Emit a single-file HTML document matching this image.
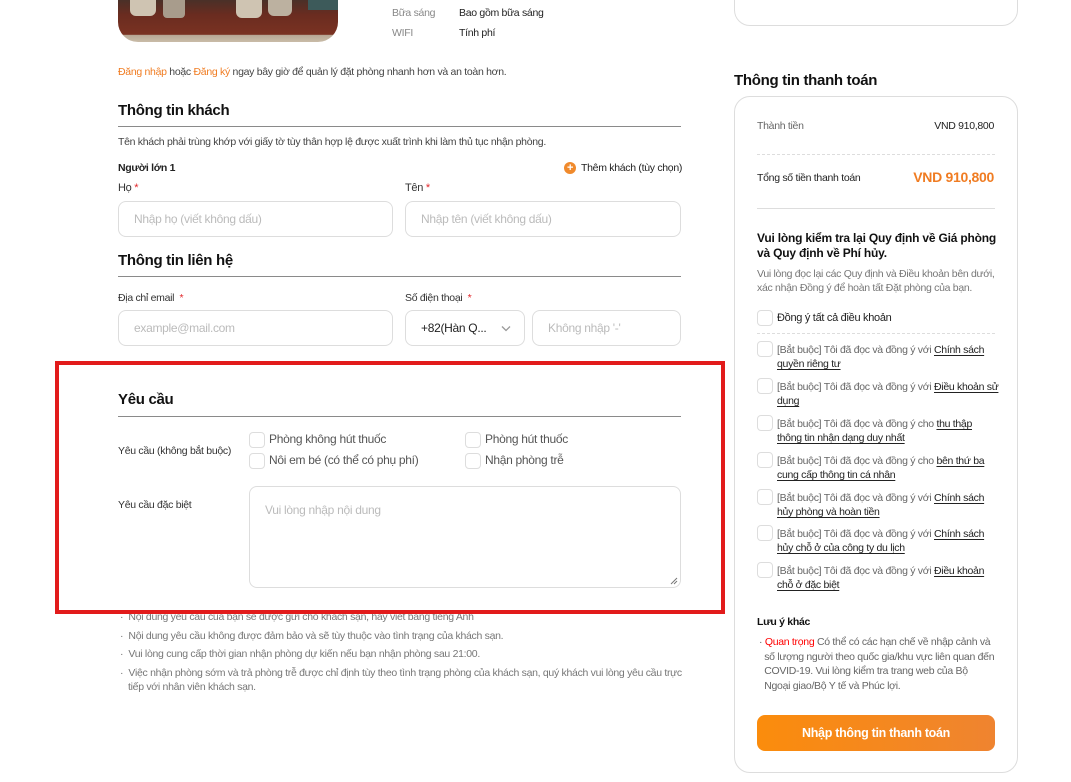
<!DOCTYPE html>
<html><head><meta charset="utf-8">
<style>
*{box-sizing:border-box;margin:0;padding:0}
body{width:1071px;height:782px;background:#fff;font-family:"Liberation Sans",Arial,sans-serif;color:#222;position:relative;overflow:hidden;letter-spacing:-0.3px}
.a{position:absolute;white-space:nowrap}
.t11{font-size:11px}
.t10{font-size:10.5px}
.h{font-size:15px;font-weight:bold;color:#111}
.line{position:absolute;height:1px;background:#8a8a8a}
.inp{position:absolute;border:1px solid #ddd;border-radius:8px;font-size:12px;color:#bbb;padding-left:15px;display:flex;align-items:center}
.cb{position:absolute;width:16px;height:16px;border:1px solid #ddd;border-radius:4px;background:#fff}
.g{color:#666}
.u{color:#222;text-decoration:underline;text-underline-offset:2px}
.req{color:#e2262a}
</style></head><body>

<!-- hotel image -->
<div class="a" style="left:118px;top:0;width:220px;height:42px;border-radius:0 0 20px 20px;overflow:hidden;background:linear-gradient(180deg,#4a3028 0,#6a2c20 35%,#7a3222 82%,#b9a996 84%,#c9bca8 100%)">
  <div style="position:absolute;left:12px;top:0;width:26px;height:16px;background:#cfc4b2;border-radius:0 0 6px 6px"></div>
  <div style="position:absolute;left:45px;top:0;width:22px;height:18px;background:#a89c8c;border-radius:0 0 4px 4px"></div>
  <div style="position:absolute;left:118px;top:0;width:26px;height:18px;background:#cfc4b2;border-radius:0 0 6px 6px"></div>
  <div style="position:absolute;left:150px;top:0;width:24px;height:16px;background:#bcb1a0;border-radius:0 0 6px 6px"></div>
  <div style="position:absolute;left:190px;top:0;width:30px;height:10px;background:#3d5a5a"></div>
</div>
<div class="a t10" style="left:392px;top:7px;color:#888">Bữa sáng</div>
<div class="a t10" style="left:459px;top:7px">Bao gồm bữa sáng</div>
<div class="a t10" style="left:392px;top:27px;color:#888">WIFI</div>
<div class="a t10" style="left:459px;top:27px">Tính phí</div>

<div class="a t10" style="left:118px;top:66px;color:#444"><span style="color:#f07c22">Đăng nhập</span> hoặc <span style="color:#f07c22">Đăng ký</span> ngay bây giờ để quản lý đặt phòng nhanh hơn và an toàn hơn.</div>

<div class="a h" style="left:118px;top:102px">Thông tin khách</div>
<div class="line" style="left:118px;top:126px;width:563px"></div>
<div class="a t10" style="left:118px;top:136px;color:#444">Tên khách phải trùng khớp với giấy tờ tùy thân hợp lệ được xuất trình khi làm thủ tục nhận phòng.</div>
<div class="a t10" style="left:118px;top:162px;font-weight:bold">Người lớn 1</div>
<div class="a" style="left:564px;top:162px;width:12px;height:12px;border-radius:50%;background:#f08a2c;color:#fff;font-size:11px;line-height:12px;text-align:center;font-weight:bold">+</div>
<div class="a t10" style="left:581px;top:162px">Thêm khách (tùy chọn)</div>
<div class="a t11" style="left:118px;top:182px;color:#333">Họ <span class="req">*</span></div>
<div class="a t11" style="left:405px;top:182px;color:#333">Tên <span class="req">*</span></div>
<div class="inp" style="left:118px;top:201px;width:275px;height:36px">Nhập họ (viết không dấu)</div>
<div class="inp" style="left:405px;top:201px;width:276px;height:36px">Nhập tên (viết không dấu)</div>

<div class="a h" style="left:118px;top:252px">Thông tin liên hệ</div>
<div class="line" style="left:118px;top:276px;width:563px"></div>
<div class="a t10" style="left:118px;top:292px;color:#333">Địa chỉ email &nbsp;<span class="req">*</span></div>
<div class="a t10" style="left:405px;top:292px;color:#333">Số điện thoại &nbsp;<span class="req">*</span></div>
<div class="inp" style="left:118px;top:310px;width:275px;height:36px">example@mail.com</div>
<div class="inp" style="left:405px;top:310px;width:120px;height:36px;color:#222">+82(Hàn Q...<svg style="position:absolute;left:95px;top:14px" width="10" height="7" viewBox="0 0 10 7"><path d="M1 1.5L5 5.5L9 1.5" fill="none" stroke="#999" stroke-width="1.3"/></svg></div>
<div class="inp" style="left:532px;top:310px;width:149px;height:36px">Không nhập '-'</div>

<!-- request section -->
<div class="a h" style="left:118px;top:391px">Yêu cầu</div>
<div class="line" style="left:118px;top:416px;width:563px"></div>
<div class="a t10" style="left:118px;top:445px;color:#333">Yêu cầu (không bắt buộc)</div>
<div class="cb" style="left:249px;top:432px"></div><div class="a" style="left:269px;top:432px;font-size:12px;color:#555">Phòng không hút thuốc</div>
<div class="cb" style="left:465px;top:432px"></div><div class="a" style="left:485px;top:432px;font-size:12px;color:#555">Phòng hút thuốc</div>
<div class="cb" style="left:249px;top:453px"></div><div class="a" style="left:269px;top:453px;font-size:12px;color:#555">Nôi em bé (có thể có phụ phí)</div>
<div class="cb" style="left:465px;top:453px"></div><div class="a" style="left:485px;top:453px;font-size:12px;color:#555">Nhận phòng trễ</div>
<div class="a t10" style="left:118px;top:499px;color:#333">Yêu cầu đặc biệt</div>
<div class="inp" style="left:249px;top:486px;width:432px;height:102px;align-items:flex-start;padding-top:16px">Vui lòng nhập nội dung<svg style="position:absolute;right:2px;bottom:2px" width="8" height="8" viewBox="0 0 8 8"><path d="M7 1L1 7M7 4L4 7" stroke="#777" stroke-width="1"/></svg></div>

<div class="a t10 g" style="left:120px;top:611px;color:#777">· &nbsp;Nội dung yêu cầu của bạn sẽ được gửi cho khách sạn, hãy viết bằng tiếng Anh</div>
<div class="a t10 g" style="left:120px;top:630px;color:#777">· &nbsp;Nội dung yêu cầu không được đảm bảo và sẽ tùy thuộc vào tình trạng của khách sạn.</div>
<div class="a t10 g" style="left:120px;top:648px;color:#777">· &nbsp;Vui lòng cung cấp thời gian nhận phòng dự kiến nếu bạn nhận phòng sau 21:00.</div>
<div class="a t10 g" style="left:120px;top:667px;color:#777">· &nbsp;Việc nhận phòng sớm và trả phòng trễ được chỉ định tùy theo tình trạng phòng của khách sạn, quý khách vui lòng yêu cầu trực</div>
<div class="a t10 g" style="left:128px;top:681px;color:#777">tiếp với nhân viên khách sạn.</div>

<div class="a" style="left:55px;top:361px;width:670px;height:253px;border:4px solid #e21b1b"></div>

<!-- right column -->
<div class="a" style="left:734px;top:-20px;width:284px;height:46px;border:1px solid #ddd;border-radius:16px"></div>
<div class="a" style="left:734px;top:72px;font-size:15px;font-weight:bold;color:#111">Thông tin thanh toán</div>
<div class="a" style="left:734px;top:96px;width:284px;height:677px;border:1px solid #ddd;border-radius:16px"></div>
<div class="a t10" style="left:757px;top:120px;color:#666">Thành tiền</div>
<div class="a t10" style="right:77px;top:120px">VND 910,800</div>
<div class="a" style="left:757px;top:154px;width:238px;border-top:1px dashed #ddd"></div>
<div class="a t10" style="left:757px;top:172px">Tổng số tiền thanh toán</div>
<div class="a" style="right:77px;top:169px;font-size:14px;font-weight:bold;color:#f07c22">VND 910,800</div>
<div class="a" style="left:757px;top:208px;width:238px;height:1px;background:#ddd"></div>
<div class="a" style="left:757px;top:231px;font-size:12px;font-weight:bold;line-height:15px;color:#111;letter-spacing:-0.2px">Vui lòng kiểm tra lại Quy định về Giá phòng<br>và Quy định về Phí hủy.</div>
<div class="a" style="left:757px;top:267px;font-size:10.5px;line-height:14px;color:#777">Vui lòng đọc lại các Quy định và Điều khoản bên dưới,<br>xác nhận Đồng ý để hoàn tất Đặt phòng của bạn.</div>
<div class="cb" style="left:757px;top:310px"></div><div class="a t11" style="left:777px;top:312px">Đồng ý tất cả điều khoản</div>
<div class="a" style="left:757px;top:333px;width:238px;border-top:1px dashed #ddd"></div>

<div class="cb" style="left:757px;top:341px"></div><div class="a t10" style="left:777px;top:343px;line-height:14px;color:#666">[Bắt buộc] Tôi đã đọc và đồng ý với <span class="u">Chính sách</span><br><span class="u">quyền riêng tư</span></div>
<div class="cb" style="left:757px;top:378px"></div><div class="a t10" style="left:777px;top:380px;line-height:14px;color:#666">[Bắt buộc] Tôi đã đọc và đồng ý với <span class="u">Điều khoản sử</span><br><span class="u">dụng</span></div>
<div class="cb" style="left:757px;top:415px"></div><div class="a t10" style="left:777px;top:417px;line-height:14px;color:#666">[Bắt buộc] Tôi đã đọc và đồng ý cho <span class="u">thu thập</span><br><span class="u">thông tin nhận dạng duy nhất</span></div>
<div class="cb" style="left:757px;top:452px"></div><div class="a t10" style="left:777px;top:454px;line-height:14px;color:#666">[Bắt buộc] Tôi đã đọc và đồng ý cho <span class="u">bên thứ ba</span><br><span class="u">cung cấp thông tin cá nhân</span></div>
<div class="cb" style="left:757px;top:489px"></div><div class="a t10" style="left:777px;top:491px;line-height:14px;color:#666">[Bắt buộc] Tôi đã đọc và đồng ý với <span class="u">Chính sách</span><br><span class="u">hủy phòng và hoàn tiền</span></div>
<div class="cb" style="left:757px;top:525px"></div><div class="a t10" style="left:777px;top:527px;line-height:14px;color:#666">[Bắt buộc] Tôi đã đọc và đồng ý với <span class="u">Chính sách</span><br><span class="u">hủy chỗ ở của công ty du lịch</span></div>
<div class="cb" style="left:757px;top:562px"></div><div class="a t10" style="left:777px;top:564px;line-height:14px;color:#666">[Bắt buộc] Tôi đã đọc và đồng ý với <span class="u">Điều khoản</span><br><span class="u">chỗ ở đặc biệt</span></div>

<div class="a t10" style="left:757px;top:616px;font-weight:bold;color:#111">Lưu ý khác</div>
<div class="a t10" style="left:759px;top:635px;line-height:14.5px;color:#666">· <span style="color:#f00">Quan trọng</span> Có thể có các hạn chế về nhập cảnh và<br>&nbsp;&nbsp;số lượng người theo quốc gia/khu vực liên quan đến<br>&nbsp;&nbsp;COVID-19. Vui lòng kiểm tra trang web của Bộ<br>&nbsp;&nbsp;Ngoại giao/Bộ Y tế và Phúc lợi.</div>

<div class="a" style="left:757px;top:715px;width:238px;height:36px;border-radius:8px;background:linear-gradient(90deg,#fb8c0c,#ef8430);color:#fff;font-size:12.5px;font-weight:bold;text-align:center;line-height:36px">Nhập thông tin thanh toán</div>

</body></html>
